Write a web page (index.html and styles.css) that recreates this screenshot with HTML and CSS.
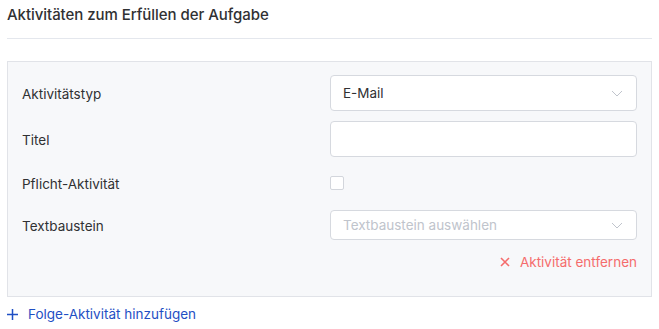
FILE: index.html
```html
<!DOCTYPE html>
<html lang="de">
<head>
<meta charset="utf-8">
<link rel="stylesheet" href="styles.css">
</head>
<body>
<div class="page">
  <h2 class="section-title">Aktivitäten zum Erfüllen der Aufgabe</h2>
  <div class="panel">
    <div class="row row-lg">
      <label class="label">Aktivitätstyp</label>
      <div class="select select-lg">
        <span class="value">E-Mail</span>
        <svg class="chev" width="12" height="7" viewBox="0 0 12 7"><path d="M1 1l5 5 5-5" fill="none" stroke="#c0c4cc" stroke-width="1"/></svg>
      </div>
    </div>
    <div class="row row-lg">
      <label class="label">Titel</label>
      <div class="input"></div>
    </div>
    <div class="row row-cb">
      <label class="label">Pflicht-Aktivität</label>
      <div class="cb-wrap"><span class="checkbox"></span></div>
    </div>
    <div class="row row-sm">
      <label class="label">Textbaustein</label>
      <div class="select select-sm">
        <span class="placeholder">Textbaustein auswählen</span>
        <svg class="chev" width="12" height="7" viewBox="0 0 12 7"><path d="M1 1l5 5 5-5" fill="none" stroke="#c0c4cc" stroke-width="1"/></svg>
      </div>
    </div>
    <div class="remove-row">
      <a class="remove">
        <svg width="10" height="10" viewBox="0 0 10 10"><path d="M1 1l8 8M9 1l-8 8" stroke="#f56c6c" stroke-width="1.6"/></svg>
        <span>Aktivität entfernen</span>
      </a>
    </div>
  </div>
  <a class="add">
    <svg width="11" height="11" viewBox="0 0 11 11"><path d="M5.5 0v11M0 5.5h11" stroke="#1f4fc4" stroke-width="1.5"/></svg>
    <span>Folge-Aktivität hinzufügen</span>
  </a>
</div>
</body>
</html>
```

FILE: styles.css
```css
html, body {
  margin: 0;
  padding: 0;
  background: #fff;
}
body {
  font-family: Inter, "Noto Sans", "Liberation Sans", sans-serif;
  color: #303133;
}
.page {
  padding: 5px 7px 0 7px;
  width: 645px;
}
.section-title {
  margin: 0;
  font-size: 15px;
  font-weight: 500;
  line-height: 20px;
  letter-spacing: -0.05px;
  padding-bottom: 13px;
  border-bottom: 1px solid #e4e7ed;
  margin-bottom: 22px;
  color: #303133;
}
.panel {
  background: #f7f8fa;
  border: 1px solid #e1e3e8;
  padding: 13px 14px 24px 14px;
}
.row {
  display: grid;
  grid-template-columns: 308px 1fr;
  align-items: center;
  margin-bottom: 10px;
}
.row-lg { height: 36px; }
.row-cb { height: 32px; margin-bottom: 11px; }
.row-sm { height: 30px; margin-bottom: 12px; }
.label {
  font-size: 13.5px;
  line-height: 20px;
  color: #303133;
  padding-top: 1px;
}
.select, .input {
  box-sizing: border-box;
  background: #fff;
  border: 1px solid #d6d9df;
  border-radius: 4px;
  display: flex;
  align-items: center;
  justify-content: space-between;
  padding: 0 12px 0 12px;
  font-size: 13.5px;
}
.select-lg, .input { height: 36px; }
.select-sm { height: 30px; }
.value { color: #303133; }
.placeholder { color: #c0c4cc; }
.chev { margin-right: 1px; }
.cb-wrap { display: flex; align-items: center; }
.checkbox {
  width: 14px;
  height: 14px;
  box-sizing: border-box;
  border: 1px solid #d3d6dc;
  border-radius: 2px;
  background: #fff;
}
.remove-row {
  display: flex;
  justify-content: flex-end;
  height: 20px;
}
.remove {
  display: flex;
  align-items: center;
  gap: 10px;
  color: #f56c6c;
  font-size: 13.5px;
  line-height: 20px;
}
.add {
  display: flex;
  align-items: center;
  gap: 10px;
  margin-top: 7px;
  color: #1f4fc4;
  font-size: 13.5px;
  line-height: 20px;
}
```
